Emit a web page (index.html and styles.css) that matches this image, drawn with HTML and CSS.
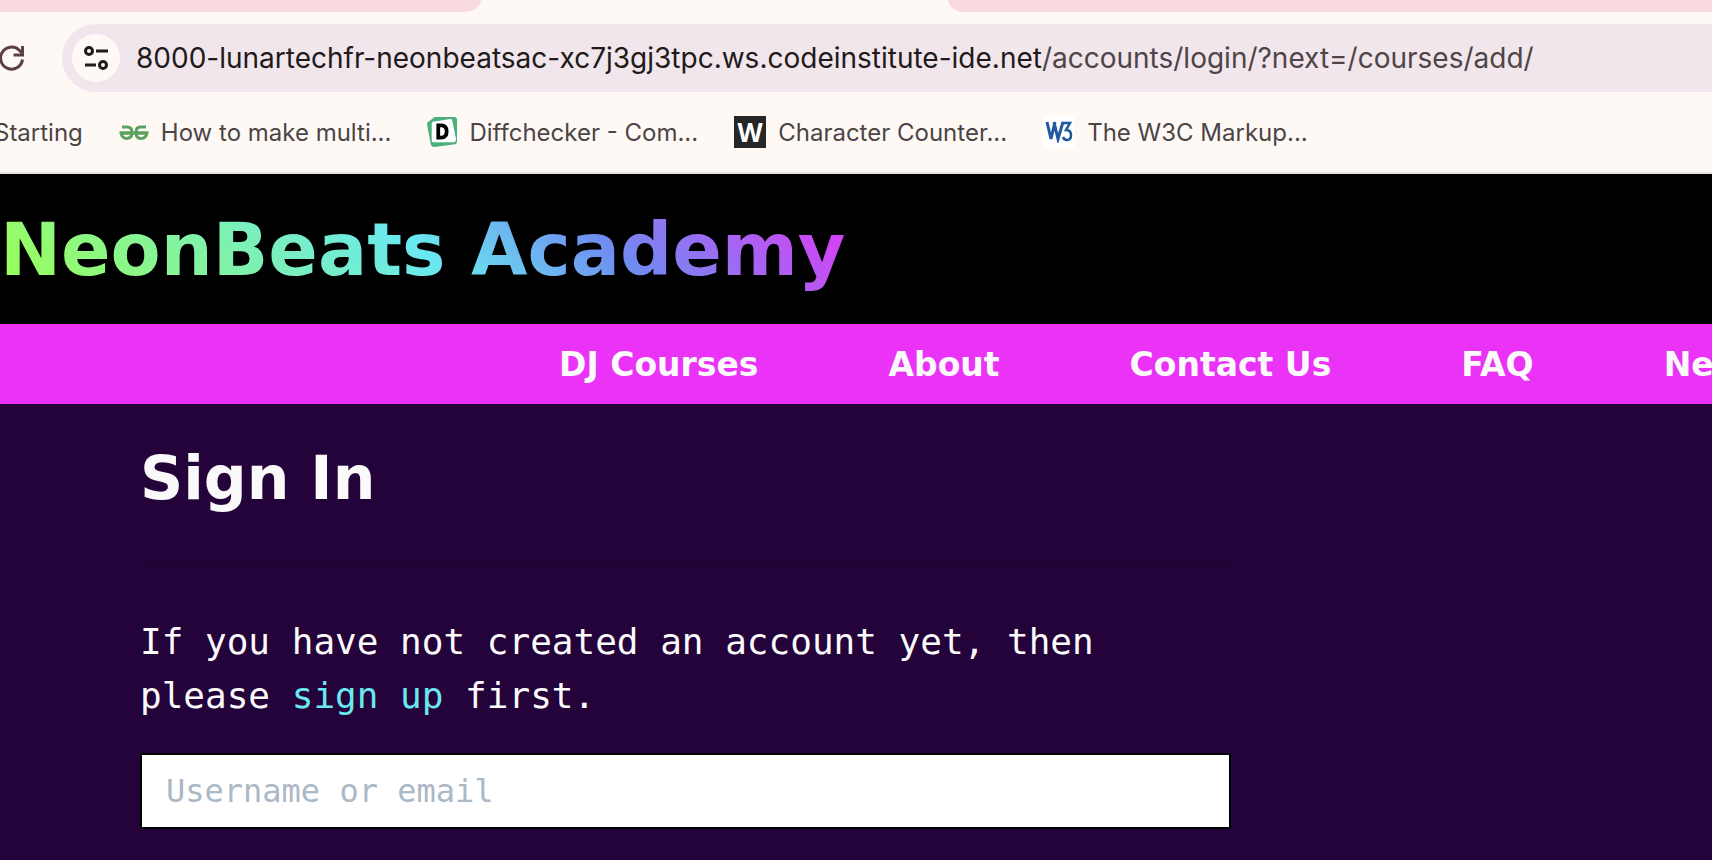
FILE: index.html
```html
<!DOCTYPE html>
<html lang="en">
<head>
<meta charset="utf-8">
<meta name="viewport" content="width=device-width, initial-scale=1">
<title>NeonBeats Academy - Sign In</title>
<link rel="stylesheet" href="styles.css">
</head>
<body>
<div class="browser">
  <div class="tabs">
    <span class="tab tab-left"></span>
    <span class="tab tab-active"></span>
    <span class="tab tab-right"></span>
  </div>
  <div class="toolbar">
    <button class="reload" type="button" aria-label="Reload">
      <svg width="32" height="32" viewBox="0 0 32 32" fill="none" stroke="#5c3f43" stroke-width="3"><path d="M28.500 17.500A11 11 0 1 1 25 8l4 4"/><path d="M28.500 4v9h-9"/></svg>
    </button>
    <div class="address">
      <button class="site-info" type="button" aria-label="View site information">
        <svg width="26" height="26" viewBox="0 0 26 26" fill="none" stroke="#201a1b" stroke-width="3"><circle cx="6" cy="6" r="3.500"/><path d="M13 6h12M2 20h11"/><circle cx="20" cy="20" r="3.500"/></svg>
      </button>
      <a class="url" href="#"><span class="host">8000-lunartechfr-neonbeatsac-xc7j3gj3tpc.ws.codeinstitute-ide.net</span>/accounts/login/?next=/courses/add/</a>
    </div>
  </div>
  <nav class="bookmarks" aria-label="Bookmarks">
    <a class="bookmark first" href="#">Starting</a>
    <a class="bookmark" href="#">
      <svg width="30" height="32" viewBox="0 0 30 32" fill="none" stroke="#5ba25e" stroke-width="3"><path d="M3 11h5q5 0 5 5.500t-5 6q-5 0-6-5.500h26q-1 5.500-6 5.500t-5-6 5-5.500h5"/><path d="M1 17h28"/></svg>
      How to make multi...</a>
    <a class="bookmark" href="#">
      <svg width="30" height="32" viewBox="0 0 32 32"><path d="M8 0h21q3 0 3 3v23q0 2-2 3L8 32q-3 0-4-3L0 8q0-3 3-4z" fill="#4cb07c"/><path d="M6 5l19-3q2 0 2 2l4 20q0 2-2 3H7q-2 0-2-2V7z" fill="#fff"/><path d="M12 9h3q6 0 6 6.500T15 22h-3z" fill="none" stroke="#000" stroke-width="4"/></svg>
      Diffchecker - Com...</a>
    <a class="bookmark" href="#"><span class="favicon favicon-w">W</span>Character Counter...</a>
    <a class="bookmark" href="#"><span class="favicon favicon-w3">
      <svg width="28" height="22" viewBox="0 0 28 22" fill="none" stroke="#1f5a9d" stroke-width="3"><path d="M2 1l4 17 4-17M9 1l4 17 5-17"/><path d="M17 2h8l-4 7q5 0 5 5t-4 5q-3 0-4-3" stroke-width="2.500"/></svg></span>The W3C Markup...</a>
  </nav>
</div>
<header class="masthead"><h1 class="brand">NeonBeats Academy</h1></header>
<nav class="menu" aria-label="Main">
  <a href="#">DJ Courses</a><a href="#">About</a><a href="#">Contact Us</a><a href="#">FAQ</a><a href="#">Newsletter</a>
</nav>
<main class="content">
  <h2 class="title">Sign In</h2>
  <hr class="rule">
  <p class="intro">If you have not created an account yet, then please <a href="#">sign up</a> first.</p>
  <form><input class="field" type="text" aria-label="Username or email" placeholder="Username or email"></form>
</main>
</body>
</html>
```
FILE: styles.css
```css
* { box-sizing: border-box; }
body { margin: 0; min-height: 100vh; overflow: hidden; background: #24023a; color: #fafafa; font-family: "DejaVu Sans", sans-serif; }
a { color: inherit; text-decoration: none; }
button { border: 0; padding: 0; background: none; display: grid; place-items: center; }
.browser { background: #fff9f6; border-bottom: 2px solid #eedfe0; font-family: Inter, sans-serif; color: #4b4546; }
.tabs { display: flex; height: 12px; }
.tab { background: #f9dadf; }
.tab-left { flex: 0 0 481px; border-bottom-right-radius: 24px 16px; }
.tab-active { flex: 0 0 467px; background: none; }
.tab-right { flex: 1; border-bottom-left-radius: 24px 16px; }
.toolbar { display: flex; padding-top: 12px; }
.reload { flex: 0 0 62px; height: 68px; justify-content: start; }
.reload svg { margin-left: -6px; }
.address { flex: 1; display: flex; align-items: center; gap: 16px; height: 68px; padding-left: 10px; background: #f1e6eb; border-radius: 34px 0 0 34px; }
.site-info { width: 48px; height: 48px; border-radius: 50%; background: #fff9f6; }
.url { font-size: 28px; line-height: 36px; white-space: nowrap; color: #4f4447; }
.host { color: #201a1b; }
.bookmarks { display: flex; align-items: center; gap: 36px; height: 80px; white-space: nowrap; font-size: 24px; }
.bookmark { display: flex; align-items: center; gap: 12px; }
.first { margin-left: -6px; }
.favicon { display: grid; place-items: center; width: 32px; height: 32px; }
.favicon-w { background: #262626; color: #fff; font: bold 26px/32px "Open Sans", sans-serif; }
.favicon-w3 { background: #fff; border-radius: 3px; }
.masthead { height: 150px; padding: 20px 0; background: #000; }
.brand { display: inline-block; margin: 0; font-size: 73px; font-weight: 700; line-height: 112px; color: transparent; background: linear-gradient(45deg, #9dff4f, #6ae8f0 50%, #6f8cf0 70%, #ea33f7); background-clip: text; -webkit-background-clip: text; white-space: nowrap; }
.menu { display: flex; align-items: center; gap: 130px; height: 80px; padding-left: 559px; overflow: hidden; background: #ea33f7; font-size: 33px; font-weight: 700; white-space: nowrap; }
.content { width: 1091px; max-width: 100%; margin-left: 140px; padding-top: 26px; }
.title { margin: 0; font-size: 60px; font-weight: 700; line-height: 96px; }
.rule { height: 3px; margin: 37px 0 49px; border: 0; background: #220234; }
.intro { margin: 0 0 30px; font: 36px/54px "DejaVu Sans Mono", monospace; }
.intro a { color: #6ae8f0; }
.field { display: block; width: 100%; height: 76px; padding: 0 24px; border: 2px solid #000; background: #fff; color: #24023a; font: 32px/48px "DejaVu Sans Mono", monospace; }
.field::placeholder { color: #abb8c6; opacity: 1; }
```
